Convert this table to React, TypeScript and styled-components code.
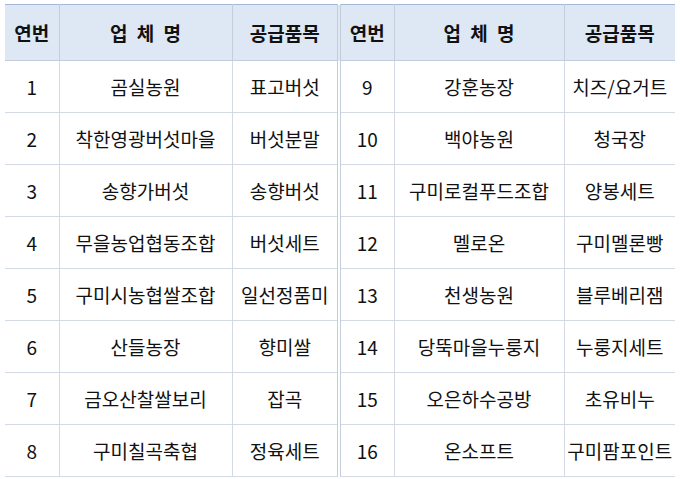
import styled, { createGlobalStyle } from "styled-components";

const GlobalStyle = createGlobalStyle`
  html, body {
    margin: 0;
    padding: 0;
    background: #ffffff;
    overflow: hidden;
  }
`;

const left = [
  ["1", "곰실농원", "표고버섯"],
  ["2", "착한영광버섯마을", "버섯분말"],
  ["3", "송향가버섯", "송향버섯"],
  ["4", "무을농업협동조합", "버섯세트"],
  ["5", "구미시농협쌀조합", "일선정품미"],
  ["6", "산들농장", "향미쌀"],
  ["7", "금오산찰쌀보리", "잡곡"],
  ["8", "구미칠곡축협", "정육세트"],
];

const right = [
  ["9", "강훈농장", "치즈/요거트"],
  ["10", "백야농원", "청국장"],
  ["11", "구미로컬푸드조합", "양봉세트"],
  ["12", "멜로온", "구미멜론빵"],
  ["13", "천생농원", "블루베리잼"],
  ["14", "당뚝마을누룽지", "누룽지세트"],
  ["15", "오은하수공방", "초유비누"],
  ["16", "온소프트", "구미팜포인트"],
];

const widths = [54, 173, 107, 55, 170, 111];

export default function App() {
  return (
    <>
      <GlobalStyle />
      <Page>
        <Table>
          <colgroup>
            {widths.map((w, i) => (
              <col key={i} style={{ width: w }} />
            ))}
          </colgroup>
          <thead>
            <tr>
              <Head>연번</Head>
              <Head $spaced>업 체 명</Head>
              <Head>공급품목</Head>
              <Head $split>연번</Head>
              <Head $spaced>업 체 명</Head>
              <Head $last>공급품목</Head>
            </tr>
          </thead>
          <tbody>
            {left.map((row, i) => (
              <tr key={i}>
                <Cell>{row[0]}</Cell>
                <Cell>{row[1]}</Cell>
                <Cell>{row[2]}</Cell>
                <Cell $split>{right[i][0]}</Cell>
                <Cell>{right[i][1]}</Cell>
                <Cell $last>{right[i][2]}</Cell>
              </tr>
            ))}
          </tbody>
        </Table>
      </Page>
    </>
  );
}

const Page = styled.div`
  padding: 4px 0 0 5px;
  font-family: "Noto Sans CJK KR", "Noto Sans", sans-serif;
  color: #111;
`;

const Table = styled.table`
  border-collapse: collapse;
  table-layout: fixed;
  width: 670px;
  border-top: 1px solid #a7b8d6;
  border-bottom: 1px solid #b9c5d6;
`;

const Head = styled.th<{ $split?: boolean; $last?: boolean; $spaced?: boolean }>`
  height: 55px;
  padding: 0;
  background: #dee7f4;
  font-size: 19px;
  font-weight: 700;
  text-align: center;
  word-spacing: ${(p) => (p.$spaced ? "5px" : "0")};
  border-left: ${(p) => (p.$split ? "4px double #c3cddb" : "none")};
  border-right: ${(p) => (p.$last ? "none" : "1px solid #c3cddb")};
  border-bottom: 1px solid #c3cddb;
  white-space: nowrap;
`;

const Cell = styled.td<{ $split?: boolean; $last?: boolean }>`
  height: 51px;
  padding: 0;
  font-size: 19px;
  font-weight: 400;
  text-align: center;
  border-left: ${(p) => (p.$split ? "4px double #c3cddb" : "none")};
  border-right: ${(p) => (p.$last ? "none" : "1px solid #d3dae4")};
  border-bottom: 1px solid #d3dae4;
  white-space: nowrap;
`;
